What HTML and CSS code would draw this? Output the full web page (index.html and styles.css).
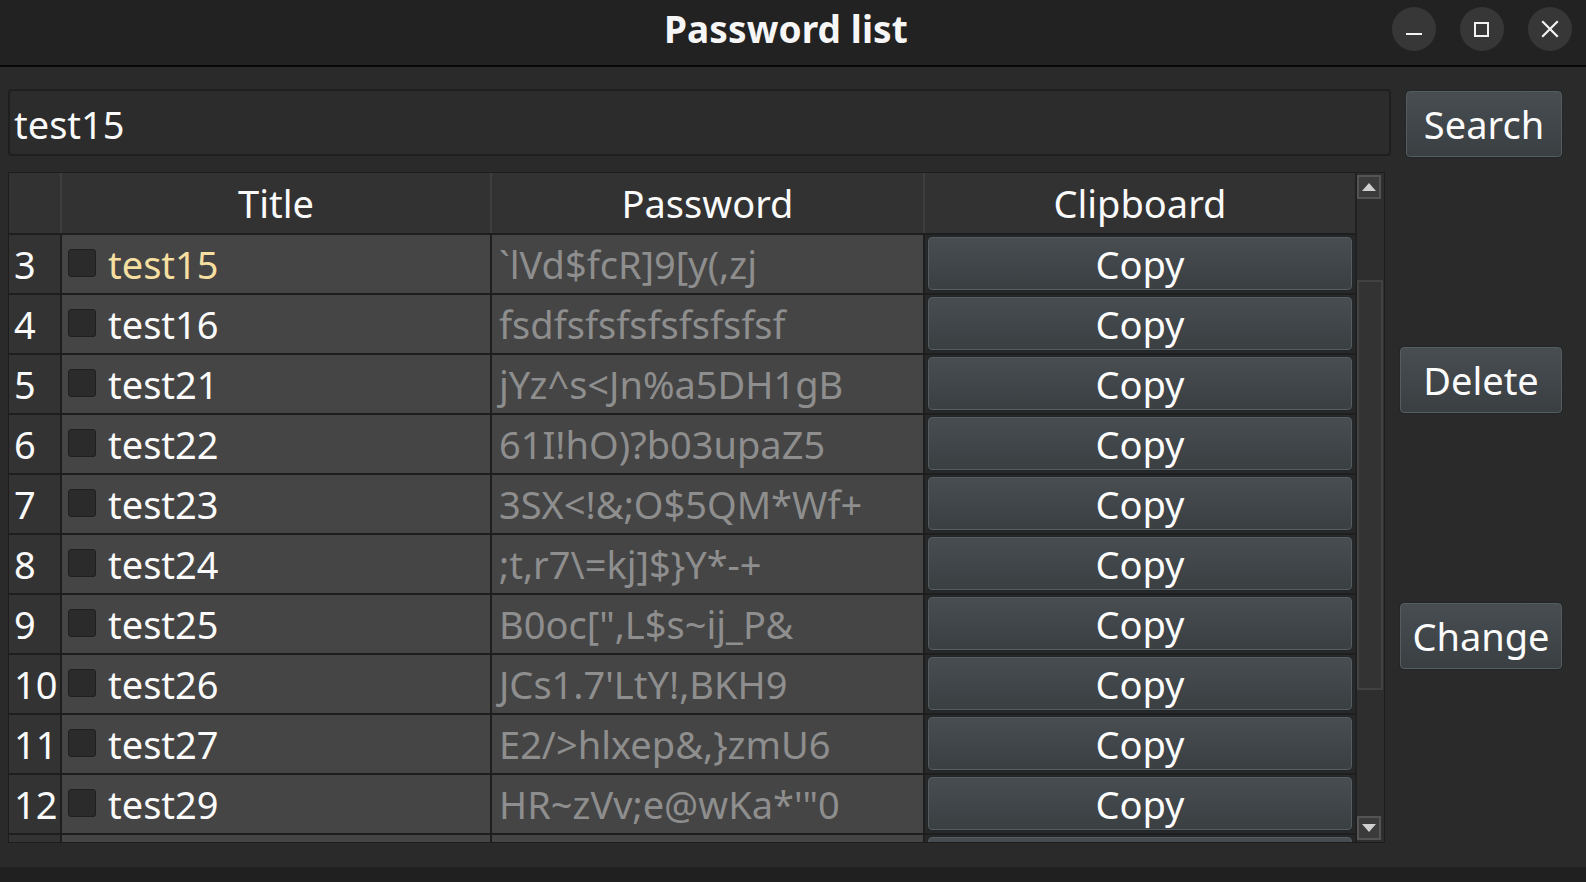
FILE: index.html
```html
<!DOCTYPE html>
<html lang="en">
<head>
<meta charset="utf-8">
<title>Password list</title>
<link rel="stylesheet" href="styles.css">
</head>
<body>
<div class="window">
  <header class="titlebar">
    <div class="tb-spacer"></div>
    <div class="tb-title">Password list</div>
    <div class="tb-controls">
      <button class="wbtn" aria-label="Minimize"><svg width="44" height="44" viewBox="0 0 44 44"><rect x="14" y="26" width="16" height="2" fill="#f2f2f2"/></svg></button>
      <button class="wbtn" aria-label="Maximize"><svg width="44" height="44" viewBox="0 0 44 44"><rect x="15" y="16" width="13" height="13" fill="none" stroke="#f2f2f2" stroke-width="2"/></svg></button>
      <button class="wbtn" aria-label="Close"><svg width="44" height="44" viewBox="0 0 44 44"><path d="M15 15 L29 29 M29 15 L15 29" stroke="#f2f2f2" stroke-width="2.2" stroke-linecap="square"/></svg></button>
    </div>
  </header>
  <main class="main">
    <div class="top-row">
      <div class="search-input">test15</div>
      <button class="btn btn-search">Search</button>
    </div>
    <div class="body-row">
      <div class="table">
        <div class="grid-wrap">
          <div class="thead">
            <div class="th"></div>
            <div class="th">Title</div>
            <div class="th">Password</div>
            <div class="th">Clipboard</div>
          </div>
          <div class="tbody">
            <div class="rn">3</div><div class="td title"><span class="cb"></span><span class="hl">test15</span></div><div class="td pw">`lVd$fcR]9[y(,zj</div><div class="clip"><button class="btn copy">Copy</button></div>
            <div class="rn">4</div><div class="td title"><span class="cb"></span><span>test16</span></div><div class="td pw">fsdfsfsfsfsfsfsfsf</div><div class="clip"><button class="btn copy">Copy</button></div>
            <div class="rn">5</div><div class="td title"><span class="cb"></span><span>test21</span></div><div class="td pw">jYz^s&lt;Jn%a5DH1gB</div><div class="clip"><button class="btn copy">Copy</button></div>
            <div class="rn">6</div><div class="td title"><span class="cb"></span><span>test22</span></div><div class="td pw">61I!hO)?b03upaZ5</div><div class="clip"><button class="btn copy">Copy</button></div>
            <div class="rn">7</div><div class="td title"><span class="cb"></span><span>test23</span></div><div class="td pw">3SX&lt;!&amp;;O$5QM*Wf+</div><div class="clip"><button class="btn copy">Copy</button></div>
            <div class="rn">8</div><div class="td title"><span class="cb"></span><span>test24</span></div><div class="td pw">;t,r7\=kj]$}Y*-+</div><div class="clip"><button class="btn copy">Copy</button></div>
            <div class="rn">9</div><div class="td title"><span class="cb"></span><span>test25</span></div><div class="td pw">B0oc[",L$s~ij_P&amp;</div><div class="clip"><button class="btn copy">Copy</button></div>
            <div class="rn">10</div><div class="td title"><span class="cb"></span><span>test26</span></div><div class="td pw">JCs1.7'LtY!,BKH9</div><div class="clip"><button class="btn copy">Copy</button></div>
            <div class="rn">11</div><div class="td title"><span class="cb"></span><span>test27</span></div><div class="td pw">E2/&gt;hlxep&amp;,}zmU6</div><div class="clip"><button class="btn copy">Copy</button></div>
            <div class="rn">12</div><div class="td title"><span class="cb"></span><span>test29</span></div><div class="td pw">HR~zVv;e@wKa*'"0</div><div class="clip"><button class="btn copy">Copy</button></div>
            <div class="rn"></div><div class="td title"></div><div class="td pw"></div><div class="clip"><button class="btn copy" aria-label="Copy"></button></div>
          </div>
        </div>
        <div class="scrollbar">
          <div class="sb-btn"><svg width="14" height="8" viewBox="0 0 14 8"><path d="M0 8 L7 0 L14 8 Z" fill="#cfcfcf"/></svg></div>
          <div class="sb-handle"></div>
          <div class="sb-btn sb-down"><svg width="14" height="8" viewBox="0 0 14 8"><path d="M0 0 L14 0 L7 8 Z" fill="#cfcfcf"/></svg></div>
        </div>
      </div>
      <div class="side">
        <button class="btn side-btn">Delete</button>
        <button class="btn side-btn">Change</button>
      </div>
    </div>
  </main>
  <footer class="bottom"></footer>
</div>
</body>
</html>
```

FILE: styles.css
```css
* { box-sizing: border-box; }
html, body { margin: 0; padding: 0; }
body {
  width: 1586px;
  height: 882px;
  overflow: hidden;
  background: #2a2a2a;
  font-family: "Noto Sans", "Open Sans", sans-serif;
  color: #fafafa;
}
.window { width: 1586px; height: 882px; display: flex; flex-direction: column; }

.titlebar {
  height: 67px;
  flex: none;
  background: #222222;
  border-bottom: 2px solid #070707;
  display: grid;
  grid-template-columns: 1fr auto 1fr;
  align-items: center;
  padding: 0 14px 8px 0;
}
.tb-title {
  font-weight: 700;
  font-size: 37px;
  color: #f6f6f6;
  letter-spacing: 0.1px;
}
.tb-controls { justify-self: end; display: flex; gap: 24px; }
.wbtn {
  width: 44px; height: 44px; padding: 0; border: none;
  border-radius: 50%;
  background: #373737;
  display: flex; align-items: center; justify-content: center;
}
.wbtn svg { display: block; }

.main {
  height: 800px;
  flex: none;
  padding: 22px 24px 0 8px;
  display: flex;
  flex-direction: column;
}
.top-row { display: flex; gap: 15px; align-items: flex-start; height: 67px; }
.search-input {
  flex: 1;
  height: 67px;
  background: #2c2c2c;
  border: 2px solid #1f1f1f;
  border-radius: 4px;
  font-size: 38px;
  color: #fafafa;
  display: flex;
  align-items: center;
  padding: 2px 0 0 4px;
}
.btn {
  font-family: "Noto Sans", "Open Sans", sans-serif;
  font-size: 38px;
  color: #fbfbfb;
  background: linear-gradient(to bottom, #474d51, #3a3f42);
  border: 1px solid #565d61;
  box-shadow: 0 0 0 1px #222628;
  border-radius: 4px;
  padding: 0;
  display: flex;
  align-items: center;
  justify-content: center;
}
.btn-search { width: 156px; height: 66px; margin-top: 2px; }

.body-row { display: flex; gap: 15px; margin-top: 16px; }
.table {
  width: 1377px;
  height: 671px;
  border: 1px solid #1d1d1d;
  background: #1e1e1e;
  display: flex;
  overflow: hidden;
}
.grid-wrap { width: 1346px; flex: none; overflow: hidden; }
.thead, .tbody {
  display: grid;
  grid-template-columns: 51px 428px 431px 430px;
  column-gap: 2px;
}
.thead {
  height: 62px;
  background: #3e3e3e;
  border-bottom: 2px solid #1e1e1e;
}
.th {
  background: #323232;
  font-size: 38px;
  color: #fafafa;
  display: flex;
  align-items: center;
  justify-content: center;
}
.tbody { grid-auto-rows: 58px; row-gap: 2px; background: #1e1e1e; }
.rn {
  background: #333333;
  font-size: 38px;
  color: #fafafa;
  display: flex;
  align-items: center;
  padding-left: 5px;
}
.td {
  background: #454545;
  font-size: 38px;
  display: flex;
  align-items: center;
  white-space: nowrap;
  overflow: hidden;
}
.title { padding-left: 6px; color: #fafafa; }
.cb {
  width: 28px; height: 28px;
  background: #2b2b2b;
  border: 1px solid #1f1f1f;
  border-radius: 3px;
  margin-right: 12px;
  flex: none;
  align-self: flex-start;
  margin-top: 14px;
}
.hl { color: #f5dfa1; }
.pw { padding-left: 7px; color: #8e8e8e; }
.clip { background: #262829; padding: 2px 3px 3px 3px; display: flex; }
.copy { flex: 1; height: 53px; }

.scrollbar {
  width: 29px;
  flex: none;
  background: #2e2e2e;
  border-left: 2px solid #212121;
  display: flex;
  flex-direction: column;
  align-items: flex-start;
}
.sb-btn {
  width: 24px; height: 24px;
  margin-top: 2px;
  background: #3b3b3b;
  border: 2px solid #545454;
  display: flex; align-items: center; justify-content: center;
}
.sb-btn svg { display: block; }
.sb-down { margin-top: auto; margin-bottom: 2px; }
.sb-handle {
  width: 26px;
  height: 410px;
  margin-top: 81px;
  background: #333333;
  border: 2px solid #424242;
}

.side {
  width: 162px;
  display: flex;
  flex-direction: column;
  gap: 190px;
  padding-top: 175px;
}
.side-btn { width: 162px; height: 66px; }

.bottom { height: 15px; flex: none; background: #202020; }
```
